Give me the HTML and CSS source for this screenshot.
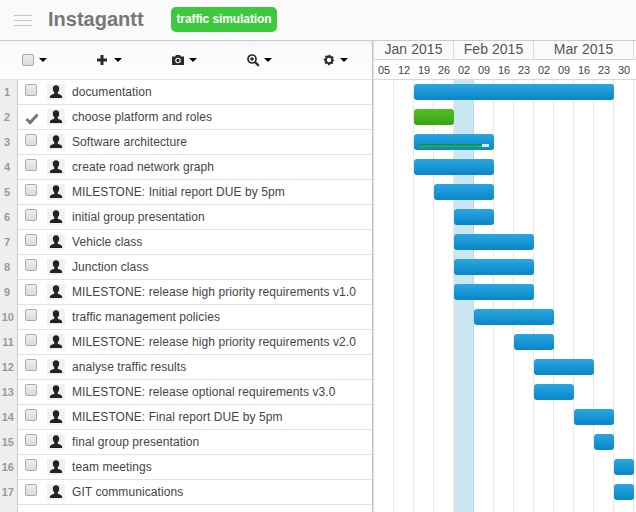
FILE: index.html
```html
<!DOCTYPE html>
<html lang="en">
<head>
<meta charset="utf-8">
<title>Instagantt</title>
<link rel="stylesheet" href="styles.css">
</head>
<body>
<svg class="defs" aria-hidden="true">
  <symbol id="person" viewBox="0 0 18 16"><path d="M9 1.200c-2.200 0-3.200 1.300-3.200 3.400 0 1.800.5 3 1.500 3.800v1.300L4 11Q2.800 11.500 2.800 14h12.400q0-2.500-1.200-3l-3.300-1.300V8.400c1-.8 1.500-2 1.500-3.800 0-2.100-1-3.400-3.200-3.400z"/></symbol>
</svg>
<header class="top">
  <div class="menu"><i></i><i></i><i></i></div>
  <h1>Instagantt</h1>
  <span class="project">traffic simulation</span>
</header>
<main>
  <section class="list">
    <div class="toolbar">
      <div class="tool"><span class="box"></span><b class="caret"></b></div>
      <div class="tool"><svg width="12" height="12"><path d="M3.500 1h3v3.500H10v3H6.500V11h-3V7.500H0v-3h3.500z"/></svg><b class="caret"></b></div>
      <div class="tool"><svg width="12" height="12"><path fill-rule="evenodd" d="M0 2.500h3L4 1h4l1 1.500h3V11H0zM6 3.700a2.800 2.800 0 1 0 .01 0zM6 4.800a1.700 1.700 0 1 1-.01 0z"/><circle cx="6" cy="6.500" r=".7"/></svg><b class="caret"></b></div>
      <div class="tool zoom"><svg width="13" height="13"><circle cx="5" cy="5" r="4" fill="none" stroke="#2b2b2b" stroke-width="1.700"/><path d="M8 8l3.800 3.800" stroke="#2b2b2b" stroke-width="2.400"/><path d="M3 5h4M5 3v4" stroke="#2b2b2b" stroke-width="1.400"/></svg><b class="caret"></b></div>
      <div class="tool last"><svg width="12" height="12"><circle cx="6" cy="6" r="3.300" fill="none" stroke="#2b2b2b" stroke-width="2.200"/><circle cx="6" cy="6" r="4.600" fill="none" stroke="#2b2b2b" stroke-width="1.400" stroke-dasharray="1.810 1.803" stroke-dashoffset=".9"/></svg><b class="caret"></b></div>
    </div>
    <div id="tasks" class="tasks"></div>
  </section>
  <section class="chart">
    <div class="months"><span class="m4">Jan 2015</span><span class="m4">Feb 2015</span><span class="m5">Mar 2015</span></div>
    <div class="weeks"><span>05</span><span>12</span><span>19</span><span>26</span><span>02</span><span>09</span><span>16</span><span>23</span><span>02</span><span>09</span><span>16</span><span>23</span><span>30</span></div>
    <div id="bars" class="bars"></div>
  </section>
</main>
<script src="app.js"></script>
</body>
</html>
```
FILE: styles.css
```css
* { box-sizing: border-box; }
body { margin: 0; height: 512px; overflow: hidden; background: #fff; color: #444; font: 12px "Liberation Sans", Arial, sans-serif; }
.defs { display: none; }
.top { display: flex; align-items: center; height: 41px; padding-left: 14px; background: #fafafa; border-bottom: 1px solid #ccc; }
.menu { display: flex; flex-direction: column; gap: 4px; width: 18px; margin-right: 16px; }
.menu i { height: 1px; background: #c5c5c5; }
h1 { width: 123px; margin: 0; padding-bottom: 3px; color: #777; font-size: 20px; line-height: 24px; white-space: nowrap; }
.project { width: 106px; height: 25px; margin-bottom: 1px; border-radius: 5px; background: #3dc93d; color: #fff; font-weight: bold; line-height: 25px; text-align: center; white-space: nowrap; letter-spacing: -.08px; }
main { display: flex; height: 471px; }
.list { flex: none; width: 373px; border-right: 1px solid #c4c4c4; }
.toolbar { display: flex; height: 39px; padding-left: 22px; background: linear-gradient(#f3f3f3, #fafafa 6px, #fdfdfd); border-bottom: 1px solid #e5e5e5; }
.tool { display: flex; flex: none; align-items: center; gap: 5px; width: 75px; height: 38px; fill: #2b2b2b; }
.tool.zoom { gap: 4px; }
.tool.last { width: 50px; padding-left: 1px; }
.tool svg { flex: none; }
.caret { border: 4px solid transparent; border-top-color: #000; border-bottom: 0; }
.box { width: 12px; height: 12px; border: 1px solid #aaa; border-radius: 2px; background: linear-gradient(#eee, #dcdcdc); }
.tasks { height: 432px; background: linear-gradient(90deg, #eee 17px, #ccc 17px, #ccc 18px, #fff 18px); }
.task { display: flex; height: 25px; }
.num { width: 18px; padding-right: 4px; color: #999; font-size: 11px; line-height: 25px; text-align: right; }
.num.short { padding-right: 8px; }
.cell { display: flex; flex: 1; border-bottom: 1px solid #e2e2e2; }
.state { width: 29px; padding: 4px 0 0 7px; }
.state .box { display: block; }
.state svg { display: block; margin-top: 3px; }
.avatar { width: 18px; height: 16px; margin: 4px 7px 0 0; border-radius: 2px; background: #f0f0f0; fill: #222; }
.name { line-height: 24px; white-space: nowrap; letter-spacing: .08px; }
.chart { flex: 1; border-left: 1px solid #ddd; overflow: hidden; }
.months { display: flex; height: 19px; background: #fafafa; border-bottom: 1px solid #d8d8d8; color: #555; font-size: 14px; line-height: 17px; text-align: center; letter-spacing: .05px; }
.months span { border-right: 1px solid #ddd; white-space: nowrap; }
.m4 { width: 80px; }
.m5 { width: 100px; }
.weeks { display: flex; height: 20px; border-bottom: 1px solid #d8d8d8; font-size: 11px; line-height: 20px; text-align: center; }
.weeks span { width: 20px; }
.bars { height: 432px; background: linear-gradient(90deg, transparent 80px, #cae7f2 80px, #cae7f2 99px, #b5d8e5 99px, #b5d8e5 100px, transparent 100px), repeating-linear-gradient(90deg, #fff 0 19px, #e8e8e8 19px 20px); }
.lane { display: grid; grid-template-columns: repeat(13, 20px); height: 25px; padding-top: 4px; }
.bar { height: 16px; border-radius: 3px; background: linear-gradient(#2ba6df, #0787c9); }
.bar.done { background: linear-gradient(#4fc024, #3ca315); }
.progress { height: 3px; margin: 10px 5px 0; background: linear-gradient(90deg, transparent 90%, #d7eaf5 90%), linear-gradient(#10873f, #2eb558); }
```
FILE: app.js
```js
const tasks = [
  ["documentation", 3, 13],
  ["choose platform and roles", 3, 5],
  ["Software architecture", 3, 7],
  ["create road network graph", 3, 7],
  ["MILESTONE: Initial report DUE by 5pm", 4, 7],
  ["initial group presentation", 5, 7],
  ["Vehicle class", 5, 9],
  ["Junction class", 5, 9],
  ["MILESTONE: release high priority requirements v1.0", 5, 9],
  ["traffic management policies", 6, 10],
  ["MILESTONE: release high priority requirements v2.0", 8, 10],
  ["analyse traffic results", 9, 12],
  ["MILESTONE: release optional requirements v3.0", 9, 11],
  ["MILESTONE: Final report DUE by 5pm", 11, 13],
  ["final group presentation", 12, 13],
  ["team meetings", 13, 14],
  ["GIT communications", 13, 14]
];
const check = '<svg width="15" height="13"><path d="M1.500 7l3.700 3.500L12.500 2.500" fill="none" stroke="#777" stroke-width="3"/></svg>';
const box = '<span class="box"></span>';
document.getElementById("tasks").innerHTML = tasks.map(([name], i) =>
  `<div class="task"><b class="num${i < 9 ? " short" : ""}">${i + 1}</b><div class="cell"><div class="state">${i === 1 ? check : box}</div><svg class="avatar"><use href="#person"/></svg><span class="name">${name}</span></div></div>`).join("");
document.getElementById("bars").innerHTML = tasks.map(([, start, end], i) =>
  `<div class="lane"><div class="bar${i === 1 ? " done" : ""}" style="grid-column:${start}/${end}">${i === 2 ? '<div class="progress"></div>' : ""}</div></div>`).join("");
```
